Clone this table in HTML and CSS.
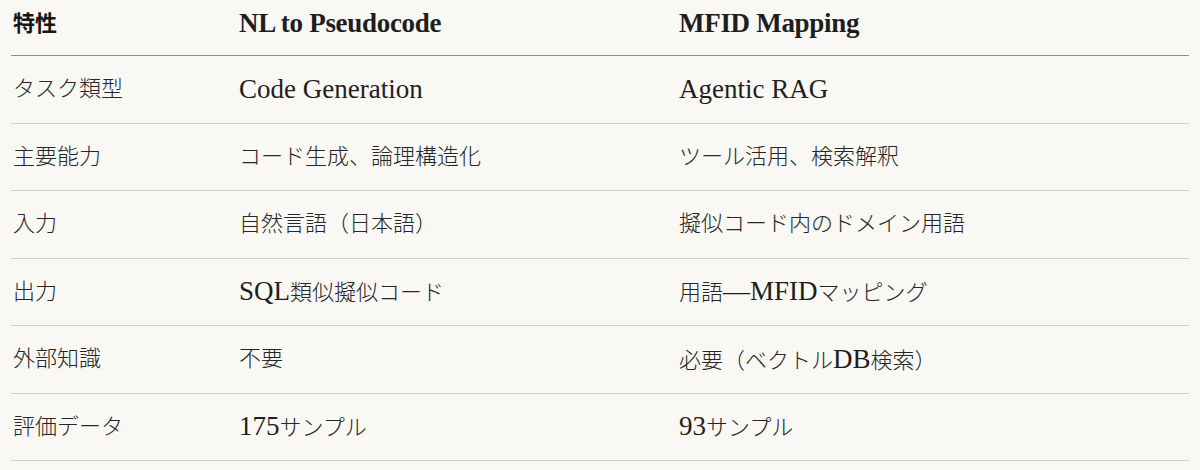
FILE: index.html
```html
<!DOCTYPE html>
<html lang="ja">
<head>
<meta charset="utf-8">
<link rel="stylesheet" href="styles.css">
</head>
<body>
<div class="table">
  <div class="row head">
    <div class="cell">特性</div>
    <div class="cell"><span class="en">NL to Pseudocode</span></div>
    <div class="cell"><span class="en">MFID Mapping</span></div>
  </div>
  <div class="row">
    <div class="cell">タスク類型</div>
    <div class="cell"><span class="en">Code Generation</span></div>
    <div class="cell"><span class="en">Agentic RAG</span></div>
  </div>
  <div class="row">
    <div class="cell">主要能力</div>
    <div class="cell">コード生成、論理構造化</div>
    <div class="cell">ツール活用、検索解釈</div>
  </div>
  <div class="row">
    <div class="cell">入力</div>
    <div class="cell">自然言語（日本語）</div>
    <div class="cell">擬似コード内のドメイン用語</div>
  </div>
  <div class="row">
    <div class="cell">出力</div>
    <div class="cell"><span class="en">SQL</span>類似擬似コード</div>
    <div class="cell">用語<span class="en">—MFID</span>マッピング</div>
  </div>
  <div class="row">
    <div class="cell">外部知識</div>
    <div class="cell">不要</div>
    <div class="cell">必要（ベクトル<span class="en">DB</span>検索）</div>
  </div>
  <div class="row">
    <div class="cell">評価データ</div>
    <div class="cell"><span class="en">175</span>サンプル</div>
    <div class="cell"><span class="en">93</span>サンプル</div>
  </div>
</div>
</body>
</html>
```
FILE: styles.css
```css
html, body {
  margin: 0;
  padding: 0;
  background: #f9f8f4;
}
body {
  font-family: "Liberation Serif", "Noto Sans CJK JP", serif;
  font-size: 22px;
  font-weight: 300;
  color: #262626;
}
.table {
  margin-left: 11px;
  width: 1178px;
}
.row {
  display: grid;
  grid-template-columns: 226px 440px 1fr;
  align-items: center;
  height: 67.5px;
  box-sizing: border-box;
  border-bottom: 1px solid #d3d0ca;
}
.row.head {
  height: 56px;
  padding-bottom: 8px;
  border-bottom: 1.5px solid #8e8b86;
  font-weight: 700;
  color: #151515;
}
.cell {
  padding-left: 2px;
  white-space: nowrap;
  line-height: 1;
}
.en {
  font-size: 27px;
  font-weight: 400;
  color: #1e1e1e;
}
.head .en {
  font-weight: 700;
  letter-spacing: -0.3px;
}
```
